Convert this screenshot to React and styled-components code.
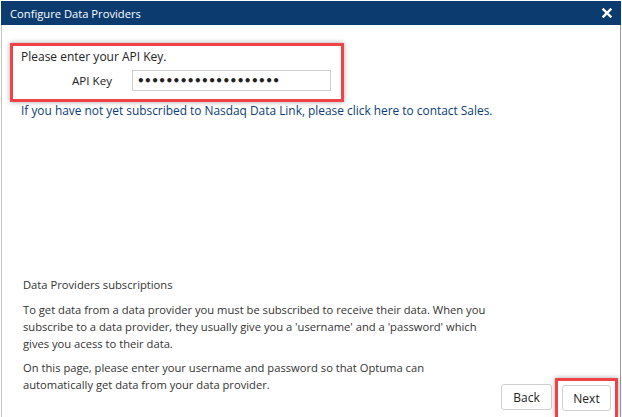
import React from "react";
import styled, { createGlobalStyle } from "styled-components";

const GlobalStyle = createGlobalStyle`
  html, body {
    margin: 0;
    padding: 0;
    background: #ffffff;
  }
  body {
    font-family: "Open Sans", "DejaVu Sans", sans-serif;
  }
`;

const Window = styled.div`
  margin: 1px 0 0 1px;
  width: 620px;
  height: 416px;
  display: flex;
  flex-direction: column;
  box-sizing: border-box;
`;

const TitleBar = styled.div`
  height: 24px;
  background: #0b3b6f;
  color: #ffffff;
  display: flex;
  align-items: center;
  justify-content: space-between;
  padding: 0 8px 0 9px;
  font-size: 11.2px;
`;

const Close = styled.button`
  border: none;
  background: none;
  padding: 0;
  width: 12px;
  height: 12px;
  display: flex;
  align-items: center;
  justify-content: center;
  cursor: pointer;
`;

const Body = styled.div`
  flex: 1;
  border-left: 1px solid #c4c4c4;
  border-right: 1px solid #9a9a9a;
  display: flex;
  flex-direction: column;
  justify-content: space-between;
  padding: 18px 0 0 8px;
`;

const Highlight = styled.div`
  width: 334px;
  height: 59px;
  box-sizing: border-box;
  border: 3px solid #ef4349;
  box-shadow: 0 0 5px rgba(0, 0, 0, 0.35);
  padding: 2px 0 0 8px;
`;

const Prompt = styled.div`
  font-size: 12px;
  color: #222;
  line-height: 17px;
`;

const KeyRow = styled.div`
  display: flex;
  align-items: center;
  margin-top: 5px;
`;

const Label = styled.label`
  width: 91px;
  text-align: right;
  font-size: 11.6px;
  color: #222;
  margin-right: 20px;
`;

const KeyInput = styled.input`
  width: 199px;
  height: 21px;
  box-sizing: border-box;
  border: 1px solid #cfcfcf;
  padding: 0 4px;
  font-size: 12px;
  font-weight: bold;
  letter-spacing: -0.55px;
  color: #222;
  font-family: "DejaVu Sans", sans-serif;
  outline: none;
`;

const SalesLink = styled.a`
  display: block;
  margin: 0 0 0 11px;
  font-size: 11.9px;
  line-height: 17px;
  color: #0d3d78;
  text-decoration: none;
  cursor: pointer;
`;

const Footer = styled.div`
  display: flex;
  align-items: flex-end;
  justify-content: space-between;
`;

const Info = styled.div`
  flex: 0 0 481px;
  box-sizing: border-box;
  padding: 0 0 24px 13px;
  font-size: 11.2px;
  line-height: 17px;
  color: #333;
`;

const InfoTitle = styled.div`
  margin-bottom: 8px;
`;

const Para = styled.p`
  margin: 0;
  & + & {
    margin-top: 7px;
  }
`;

const Buttons = styled.div`
  flex-shrink: 0;
  display: flex;
  align-items: flex-end;
  gap: 3px;
  padding-right: 2px;
`;

const Button = styled.button`
  height: 26px;
  width: ${(p) => p.$w}px;
  border: 1px solid #cfcfcf;
  border-radius: 3px;
  background: #ffffff;
  font-family: "Open Sans", sans-serif;
  font-size: 12px;
  color: #222;
  cursor: pointer;
`;

const ButtonMark = styled.div`
  border: 3px solid #ef4349;
  border-bottom: none;
  box-shadow: 0 0 5px rgba(0, 0, 0, 0.35);
  padding: 4px 4px 6px 4px;
`;

export default function App() {
  return (
    <>
      <GlobalStyle />
      <Window>
        <TitleBar>
          <span>Configure Data Providers</span>
          <Close aria-label="Close">
            <svg width="10" height="10" viewBox="0 0 10 10">
              <path d="M1.5 1.5 L8.5 8.5 M8.5 1.5 L1.5 8.5" stroke="#fff" strokeWidth="2.4" strokeLinecap="square" />
            </svg>
          </Close>
        </TitleBar>
        <Body>
          <div>
            <Highlight>
              <Prompt>Please enter your API Key.</Prompt>
              <KeyRow>
                <Label>API Key</Label>
                <KeyInput type="password" defaultValue="xxxxxxxxxxxxxxxxxxxx" />
              </KeyRow>
            </Highlight>
            <SalesLink>
              If you have not yet subscribed to Nasdaq Data Link, please click here to contact Sales.
            </SalesLink>
          </div>
          <Footer>
            <Info>
              <InfoTitle>Data Providers subscriptions</InfoTitle>
              <Para>
                To get data from a data provider you must be subscribed to receive their data. When you
                subscribe to a data provider, they usually give you a 'username' and a 'password' which
                gives you acess to their data.
              </Para>
              <Para>
                On this page, please enter your username and password so that Optuma can automatically
                get data from your data provider.
              </Para>
            </Info>
            <Buttons>
              <Button $w={51} style={{ marginBottom: 7 }}>Back</Button>
              <ButtonMark>
                <Button $w={49}>Next</Button>
              </ButtonMark>
            </Buttons>
          </Footer>
        </Body>
      </Window>
    </>
  );
}
